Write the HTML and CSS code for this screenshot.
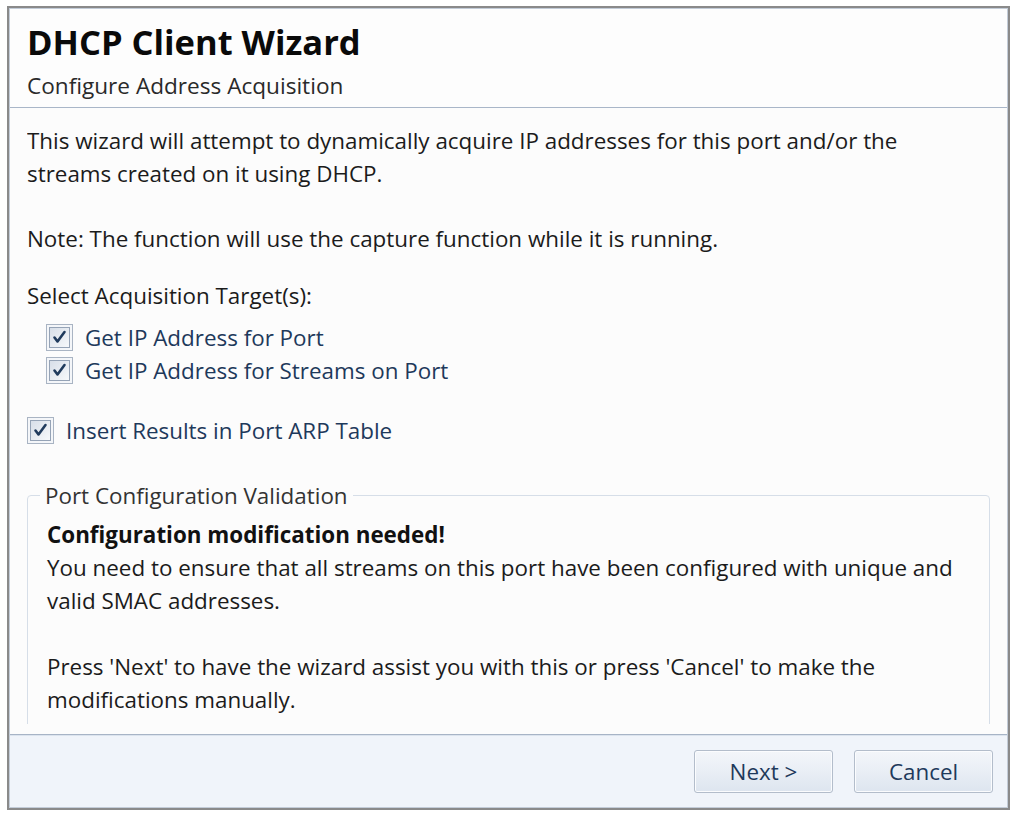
FILE: index.html
```html
<!DOCTYPE html>
<html>
<head>
<meta charset="utf-8">
<link rel="stylesheet" href="styles.css">
</head>
<body>
<div class="window">
  <div class="frame">
    <header class="header">
      <div class="title">DHCP Client Wizard</div>
      <div class="subtitle">Configure Address Acquisition</div>
    </header>
    <main class="content">
      <div class="scroll">
        <p class="intro">This wizard will attempt to dynamically acquire IP addresses for this port and/or the streams created on it using DHCP.</p>
        <p class="note">Note: The function will use the capture function while it is running.</p>
        <p class="select">Select Acquisition Target(s):</p>
        <div class="targets">
          <label class="check"><span class="box"><svg viewBox="0 0 27 27" width="27" height="27"><defs><linearGradient id="g" x1="0" y1="0" x2="1" y2="1"><stop offset="0" stop-color="#d7dee8"/><stop offset="1" stop-color="#f7f9fb"/></linearGradient></defs><rect x="0.5" y="0.5" width="26" height="26" fill="#f4f6f9" stroke="#a9b4c3"/><rect x="3.5" y="3.5" width="20" height="20" fill="url(#g)" stroke="#95a3b6"/><path d="M8.5 13.5 L11.5 17.5 L18.5 8" fill="none" stroke="#203b5d" stroke-width="2.6" stroke-linecap="round" stroke-linejoin="round"/></svg></span><span class="lbl">Get IP Address for Port</span></label>
          <label class="check"><span class="box"><svg viewBox="0 0 27 27" width="27" height="27"><rect x="0.5" y="0.5" width="26" height="26" fill="#f4f6f9" stroke="#a9b4c3"/><rect x="3.5" y="3.5" width="20" height="20" fill="url(#g)" stroke="#95a3b6"/><path d="M8.5 13.5 L11.5 17.5 L18.5 8" fill="none" stroke="#203b5d" stroke-width="2.6" stroke-linecap="round" stroke-linejoin="round"/></svg></span><span class="lbl">Get IP Address for Streams on Port</span></label>
        </div>
        <label class="check insert"><span class="box"><svg viewBox="0 0 27 27" width="27" height="27"><rect x="0.5" y="0.5" width="26" height="26" fill="#f4f6f9" stroke="#a9b4c3"/><rect x="3.5" y="3.5" width="20" height="20" fill="url(#g)" stroke="#95a3b6"/><path d="M8.5 13.5 L11.5 17.5 L18.5 8" fill="none" stroke="#203b5d" stroke-width="2.6" stroke-linecap="round" stroke-linejoin="round"/></svg></span><span class="lbl">Insert Results in Port ARP Table</span></label>
        <fieldset class="group">
          <legend>Port Configuration Validation</legend>
          <div class="strong">Configuration modification needed!</div>
          <p class="msg">You need to ensure that all streams on this port have been configured with unique and valid SMAC addresses.</p>
          <p class="msg gap">Press 'Next' to have the wizard assist you with this or press 'Cancel' to make the modifications manually.</p>
          <div class="filler"></div>
        </fieldset>
      </div>
    </main>
    <footer class="footer">
      <button class="btn">Next &gt;</button>
      <button class="btn">Cancel</button>
    </footer>
  </div>
</div>
</body>
</html>
```
FILE: styles.css
```css
html, body {
  margin: 0;
  padding: 0;
  background: #ffffff;
}
body {
  font-family: "Open Sans", "Noto Sans", sans-serif;
  color: #1b1b1b;
}
.window {
  margin: 6px 0 0 7px;
  width: 1003px;
  height: 804px;
  box-sizing: border-box;
  border: 2px solid #8a8a8a;
}
.frame {
  height: 100%;
  box-sizing: border-box;
  border: 1px solid #c3ccd8;
  display: flex;
  flex-direction: column;
  background: #fcfcfc;
}
.header {
  height: 99px;
  box-sizing: border-box;
  border-bottom: 1px solid #a9b6c8;
  background: #fdfdfd;
  padding: 13px 0 0 17px;
}
.title {
  font-weight: 700;
  font-size: 34.5px;
  line-height: 40px;
  color: #0a0a0a;
}
.subtitle {
  font-size: 22.6px;
  line-height: 28px;
  margin-top: 10px;
  color: #2a2a2a;
}
.content {
  flex: 1;
  min-height: 0;
  display: flex;
  flex-direction: column;
  padding: 0 17px 10px 17px;
}
.scroll {
  flex: 1;
  overflow: hidden;
  font-size: 22.4px;
  line-height: 33px;
}
p {
  margin: 0;
}
.intro {
  margin-top: 16px;
  max-width: 930px;
}
.note {
  margin-top: 32px;
}
.select {
  margin-top: 24px;
}
.targets {
  margin-top: 9px;
  padding-left: 19px;
}
.check {
  display: flex;
  align-items: center;
  height: 33px;
  color: #1e395b;
}
.box {
  width: 27px;
  height: 27px;
  display: block;
  margin-right: 12px;
}
.box svg {
  display: block;
}
.insert {
  margin-top: 27px;
}
.group {
  margin: 32px 0 0 0;
  padding: 6px 19px 0 19px;
  border: 1px solid #d6dee8;
  border-radius: 4px;
  min-width: 0;
}
.group legend {
  padding: 0 5px;
  margin-left: -7px;
  line-height: 33px;
  color: #333333;
}
.strong {
  font-weight: 700;
  color: #111111;
}
.msg.gap {
  margin-top: 33px;
}
.filler {
  height: 80px;
}
.footer {
  height: 73px;
  flex: none;
  box-sizing: border-box;
  border-top: 1px solid #a7b4c6;
  box-shadow: inset 0 1px 0 #dce4ee;
  background: #f0f4fa;
  display: flex;
  justify-content: flex-end;
  align-items: flex-start;
  gap: 21px;
  padding: 15px 14px 0 0;
}
.btn {
  width: 139px;
  height: 43px;
  border: 1px solid #b3bdcb;
  border-radius: 3px;
  background: linear-gradient(#f3f6fa, #e9eef5 50%, #dde5ef);
  font-family: "Open Sans", "Noto Sans", sans-serif;
  font-size: 22.4px;
  color: #1e395b;
  padding: 0;
  box-shadow: inset 0 0 0 1px #fbfcfe;
}
```
